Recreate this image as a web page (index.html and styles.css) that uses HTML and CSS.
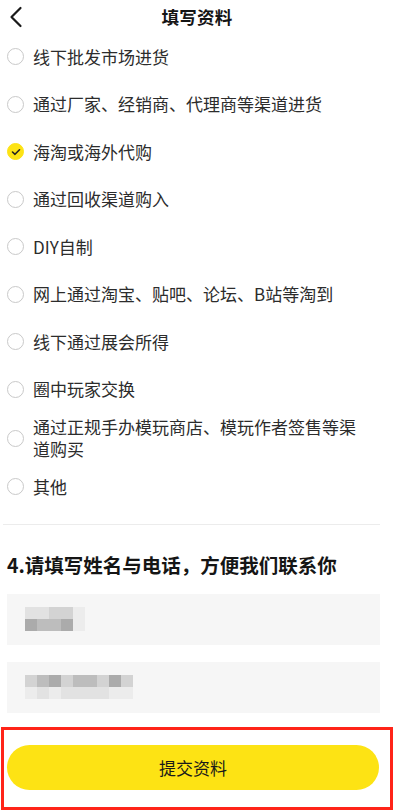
FILE: index.html
```html
<!DOCTYPE html>
<html lang="zh">
<head>
<meta charset="utf-8">
<title>填写资料</title>
<link rel="stylesheet" href="styles.css">
</head>
<body>
<header class="topbar">
  <span class="back">
    <svg width="14" height="22" viewBox="0 0 14 22"><polyline points="11.5,2 2.5,11 11.5,20" fill="none" stroke="#1a1a1a" stroke-width="2.2" stroke-linecap="round" stroke-linejoin="round"/></svg>
  </span>
  <h1 class="title">填写资料</h1>
  <span></span>
</header>
<main class="content">
  <ul class="options">
    <li class="opt"><span class="radio"></span><span class="label">线下批发市场进货</span></li>
    <li class="opt"><span class="radio"></span><span class="label">通过厂家、经销商、代理商等渠道进货</span></li>
    <li class="opt"><span class="radio checked"><svg width="10" height="8" viewBox="0 0 10 8"><polyline points="1.5,4 4,6.3 8.5,1.8" fill="none" stroke="#222" stroke-width="1.6" stroke-linecap="round" stroke-linejoin="round"/></svg></span><span class="label">海淘或海外代购</span></li>
    <li class="opt"><span class="radio"></span><span class="label">通过回收渠道购入</span></li>
    <li class="opt"><span class="radio"></span><span class="label">DIY自制</span></li>
    <li class="opt"><span class="radio"></span><span class="label">网上通过淘宝、贴吧、论坛、B站等淘到</span></li>
    <li class="opt"><span class="radio"></span><span class="label">线下通过展会所得</span></li>
    <li class="opt"><span class="radio"></span><span class="label">圈中玩家交换</span></li>
    <li class="opt"><span class="radio"></span><span class="label">通过正规手办模玩商店、模玩作者签售等渠道购买</span></li>
    <li class="opt"><span class="radio"></span><span class="label">其他</span></li>
  </ul>
  <hr class="divider">
  <h2 class="question">4.请填写姓名与电话，方便我们联系你</h2>
  <div class="field">
    <div class="blur cols5">
      <i class="g2"></i><i class="g2"></i><i class="g3"></i><i class="g3"></i><i class="g1"></i>
      <i class="g5"></i><i class="g4"></i><i class="g4"></i><i class="g5"></i><i class="g1"></i>
    </div>
  </div>
  <div class="field">
    <div class="blur cols9">
      <i class="g3"></i><i class="g4"></i><i class="g5"></i><i class="g3"></i><i class="g4"></i><i class="g4"></i><i class="g3"></i><i class="g5"></i><i class="g3"></i>
      <i class="g1"></i><i class="g2"></i><i class="g1"></i><i class="g2"></i><i class="g2"></i><i class="g2"></i><i class="g2"></i><i class="g1"></i><i class="g1"></i>
    </div>
  </div>
</main>
<div class="highlight">
  <button class="submit">提交资料</button>
</div>
</body>
</html>
```

FILE: styles.css
```css
* { box-sizing: border-box; }
html, body { margin: 0; padding: 0; background: #fff; }
body {
  width: 394px;
  height: 810px;
  overflow: hidden;
  font-family: "Noto Sans CJK SC", "Noto Sans", sans-serif;
  color: #333;
}
.topbar {
  height: 33px;
  display: grid;
  grid-template-columns: 60px 1fr 60px;
  align-items: center;
}
.back {
  display: flex;
  align-items: center;
  padding-left: 9px;
  padding-top: 1px;
}
.title {
  margin: 0;
  text-align: center;
  font-size: 17.5px;
  font-weight: bold;
  color: #151515;
  line-height: 24px;
  letter-spacing: 0.3px;
}
.content {
  padding: 0 14px 0 7px;
}
.options {
  list-style: none;
  margin: 0;
  padding: 0;
}
.opt {
  min-height: 47.5px;
  display: flex;
  align-items: center;
  gap: 9px;
  padding: 3px 0;
}
.radio {
  flex: none;
  width: 17px;
  height: 17px;
  border-radius: 50%;
  border: 1px solid #c9c9c9;
  display: flex;
  align-items: center;
  justify-content: center;
}
.radio.checked {
  border-color: #fde314;
  background: #fde314;
}
.label {
  font-size: 17px;
  line-height: 22px;
  color: #2c2c2c;
  padding-right: 14px;
}
.divider {
  margin: 13px 0 0 -4px;
  border: 0;
  height: 1px;
  background: #ececec;
}
.question {
  margin: 27px 0 0 0;
  font-size: 19.5px;
  line-height: 26px;
  font-weight: bold;
  color: #151515;
}
.field {
  margin-top: 16px;
  height: 51px;
  background: #f6f6f6;
  display: flex;
  align-items: center;
  padding-left: 18px;
}
.field + .field { margin-top: 17px; }
.blur {
  display: grid;
  grid-auto-rows: 12px;
}
.blur.cols5 { grid-template-columns: repeat(5, 12px); }
.blur.cols9 { grid-template-columns: repeat(9, 12px); }
.blur i { display: block; }
.g1 { background: #ececec; }
.g2 { background: #e2e2e2; }
.g3 { background: #d3d3d3; }
.g4 { background: #bdbdbd; }
.g5 { background: #ababab; }
.highlight {
  margin: 14px 1px 0 1px;
  height: 83px;
  border: 3px solid #ff2418;
  padding: 15px 11px 0 3px;
}
.submit {
  display: block;
  width: 100%;
  height: 45px;
  border: 0;
  border-radius: 23px;
  background: #fde314;
  font-family: "Noto Sans CJK SC", "Noto Sans", sans-serif;
  font-size: 17px;
  color: #1a1a1a;
  padding: 0;
}
```
